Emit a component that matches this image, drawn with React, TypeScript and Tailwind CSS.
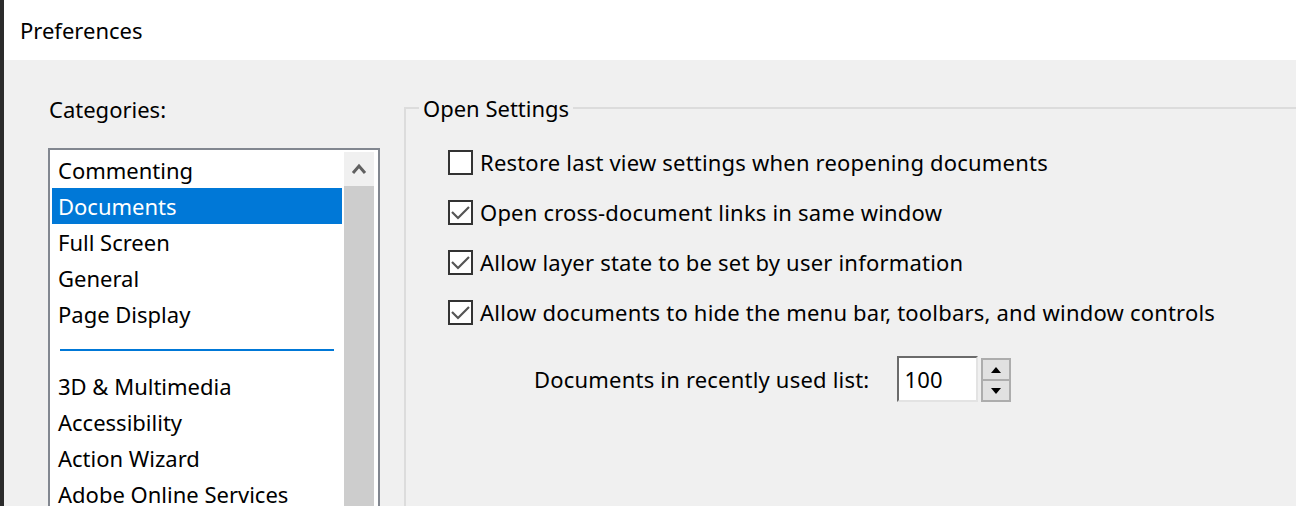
import React from "react";

const categoriesTop = ["Commenting", "Documents", "Full Screen", "General", "Page Display"];
const categoriesBottom = ["3D & Multimedia", "Accessibility", "Action Wizard", "Adobe Online Services"];

const options = [
  { label: "Restore last view settings when reopening documents", checked: false },
  { label: "Open cross-document links in same window", checked: true },
  { label: "Allow layer state to be set by user information", checked: true },
  { label: "Allow documents to hide the menu bar, toolbars, and window controls", checked: true },
];

function Checkbox({ checked }: { checked: boolean }) {
  return (
    <svg width="25" height="25" viewBox="0 0 25 25" className="shrink-0">
      <rect x="1" y="1" width="23" height="23" fill="#ffffff" stroke="#333333" strokeWidth="2" />
      {checked && (
        <polyline points="4,12 10,18 21,7" fill="none" stroke="#555555" strokeWidth="2.2" />
      )}
    </svg>
  );
}

function CategoryItem({ name, selected }: { name: string; selected?: boolean }) {
  return (
    <div
      className={
        "h-[36px] flex items-center pl-[6px] " +
        (selected ? "bg-[#0078d7] text-white" : "text-black")
      }
    >
      {name}
    </div>
  );
}

export default function App() {
  return (
    <div
      className="w-[1296px] h-[506px] flex overflow-hidden text-[22px] leading-[36px]"
      style={{ fontFamily: '"Noto Sans", "Open Sans", sans-serif' }}
    >
      <div className="w-[4px] bg-[#2b2b2b] shrink-0" />
      <div className="flex-1 flex flex-col min-w-0">
        <div className="h-[60px] bg-white flex items-center pl-[16px] text-black shrink-0">
          Preferences
        </div>
        <div className="flex-1 bg-[#f0f0f0] flex min-h-0">
          {/* categories */}
          <div className="w-[400px] shrink-0 pl-[44px] pt-[31px] flex flex-col">
            <div className="pl-[1px] text-black">Categories:</div>
            <div className="mt-[21px] w-[332px] h-[400px] border-2 border-[#828790] bg-white p-[2px] flex">
              <div className="flex-1 flex flex-col">
                {categoriesTop.map((c) => (
                  <CategoryItem key={c} name={c} selected={c === "Documents"} />
                ))}
                <div className="h-[36px] flex items-center pl-[8px] pr-[8px]">
                  <div className="h-[2px] w-full bg-[#0078d7]" />
                </div>
                {categoriesBottom.map((c) => (
                  <CategoryItem key={c} name={c} />
                ))}
              </div>
              <div className="w-[30px] ml-[2px] mr-[2px] flex flex-col">
                <div className="h-[34px] bg-[#f0f0f0] flex items-center justify-center">
                  <svg width="16" height="12" viewBox="0 0 16 12">
                    <polyline points="2,10 8,3 14,10" fill="none" stroke="#606060" strokeWidth="3" />
                  </svg>
                </div>
                <div className="flex-1 bg-[#cdcdcd]" />
              </div>
            </div>
          </div>

          {/* open settings group */}
          <fieldset className="flex-1 mt-[30px] border-t-2 border-l-2 border-[#dcdcdc] px-0 pb-0 min-w-0">
            <legend className="ml-[13px] px-[4px] text-black">Open Settings</legend>
            <div className="pt-[11px] flex flex-col">
              {options.map((o) => (
                <div
                  key={o.label}
                  className="h-[50px] flex items-center pl-[42px] gap-[7px] text-black whitespace-nowrap tracking-[0.2px]"
                >
                  <Checkbox checked={o.checked} />
                  <span>{o.label}</span>
                </div>
              ))}
              <div className="mt-[19px] flex items-center pl-[128px] text-black whitespace-nowrap tracking-[0.2px]">
                <span>Documents in recently used list:</span>
                <div className="ml-[28px] w-[81px] h-[46px] bg-white border-2 border-t-[#6b6b6b] border-l-[#6b6b6b] border-r-[#e3e3e3] border-b-[#e3e3e3] flex items-center pl-[5px]">
                  100
                </div>
                <div className="ml-[3px] w-[30px] h-[44px] mt-[2px] flex flex-col border-2 border-[#adadad] bg-[#e1e1e1]">
                  <div className="flex-1 flex items-center justify-center border-b border-[#adadad]">
                    <svg width="12" height="6" viewBox="0 0 12 6">
                      <polygon points="1,6 6,0 11,6" fill="#000000" />
                    </svg>
                  </div>
                  <div className="flex-1 flex items-center justify-center border-t border-[#adadad]">
                    <svg width="12" height="6" viewBox="0 0 12 6">
                      <polygon points="1,0 6,6 11,0" fill="#000000" />
                    </svg>
                  </div>
                </div>
              </div>
            </div>
          </fieldset>
        </div>
      </div>
    </div>
  );
}
